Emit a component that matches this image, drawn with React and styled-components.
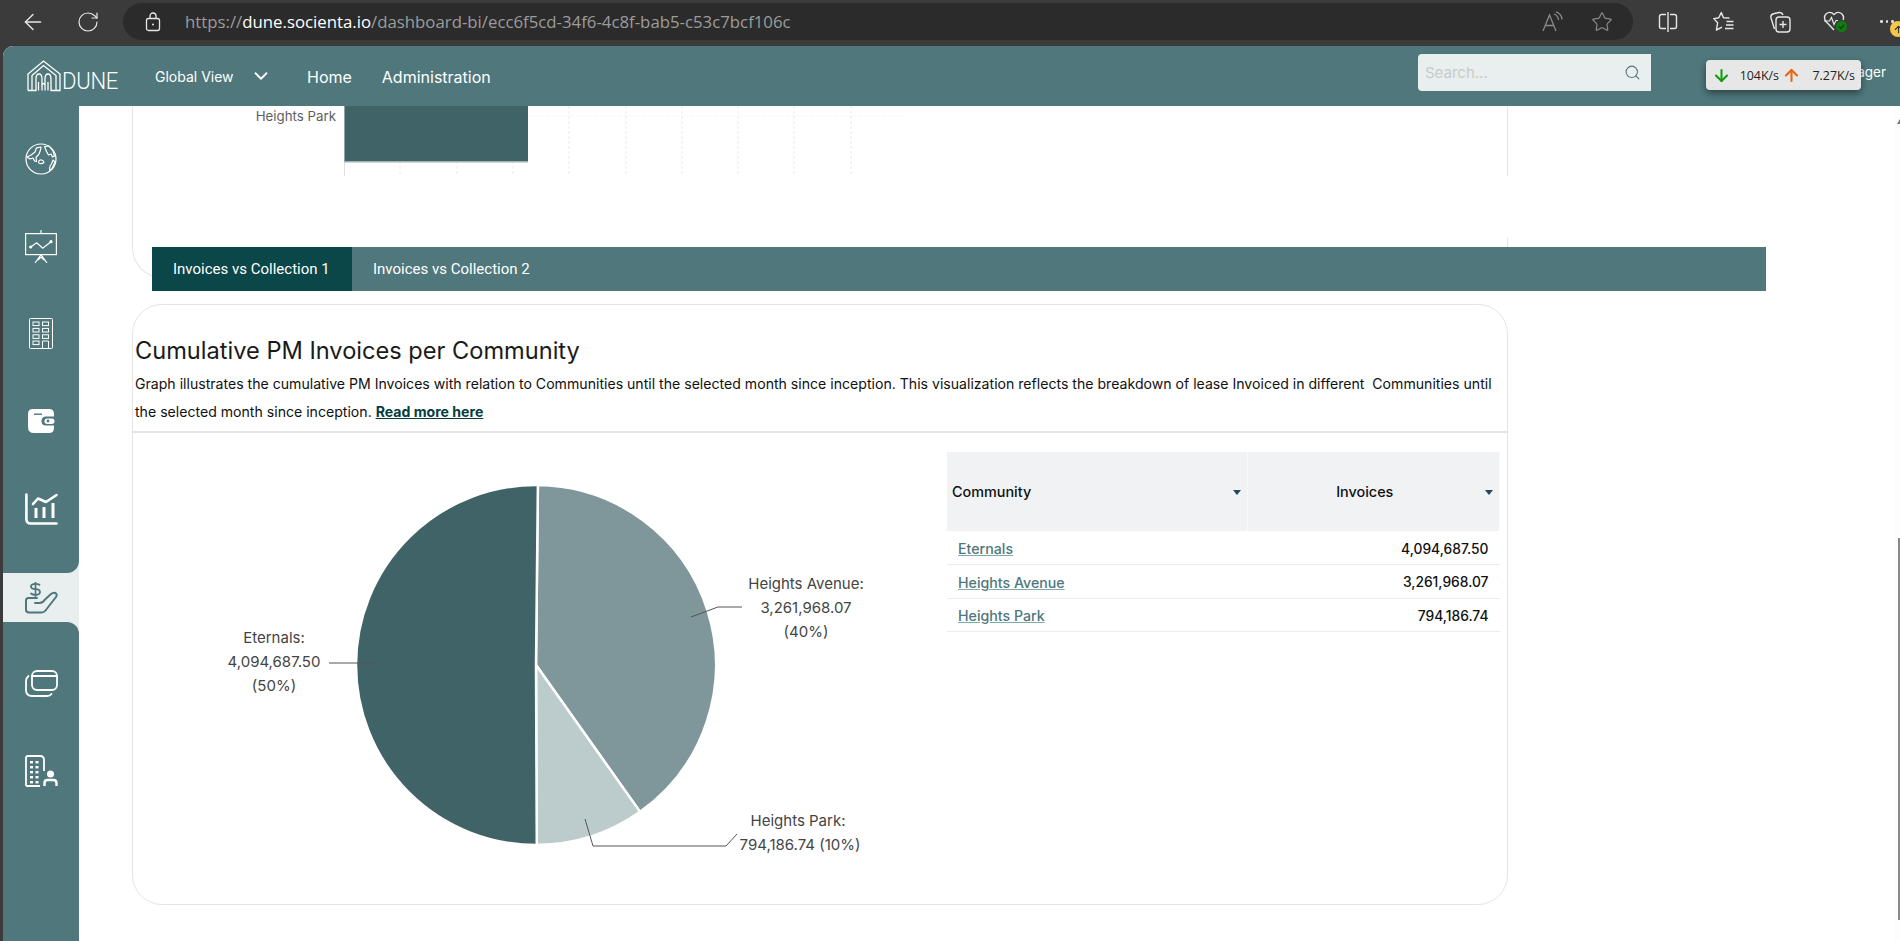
import styled, { createGlobalStyle } from "styled-components";
import { ArrowDown, ArrowLeft, ArrowUp, ChevronDown, RotateCw, Search, Star } from "lucide-react";

const TEAL = "#4f777c";
const PALE = "#e9eeee";
const FONT = `Inter, "Open Sans", sans-serif`;

const GlobalStyle = createGlobalStyle`
    html, body {
        margin: 0;
        padding: 0;
        background: #3b3b3b;
        overflow: hidden;
    }
    * {
        box-sizing: border-box;
    }
`;

const Page = styled.div`
    width: 1900px;
    height: 941px;
    display: flex;
    flex-direction: column;
    background: #3b3b3b;
    font-family: ${FONT};
`;

/* browser toolbar */
const BrowserBar = styled.div`
    height: 46px;
    flex: none;
    display: flex;
    align-items: flex-start;
    padding-top: 3px;
    color: #e6e6e6;
`;

const BrowserSlot = styled.div`
    width: ${(p) => p.$width || 56}px;
    height: 37px;
    flex: none;
    display: flex;
    align-items: center;
    justify-content: ${(p) => p.$justify || "center"};
`;

const UrlPill = styled.div`
    width: 1510px;
    height: 37px;
    margin: 0 7px 0 7px;
    flex: none;
    display: flex;
    align-items: center;
    padding-left: 22px;
    background: #2b2b2b;
    border-radius: 19px;
    color: #a9a9a9;
`;

const UrlText = styled.div`
    margin-left: 24px;
    flex: 1;
    font-family: "Open Sans", sans-serif;
    font-size: 16.8px;
    color: #9c9c9c;
    white-space: nowrap;
    b {
        font-weight: 400;
        color: #fff;
    }
`;

const ReadAloud = styled.span`
    display: flex;
    align-items: center;
    width: 49px;
`;

const FavSlot = styled.span`
    display: flex;
    width: 42px;
`;

const Dots = styled.div`
    display: flex;
    gap: 3px;
    margin-left: 16px;
    i {
        width: 2.5px;
        height: 2.5px;
        border-radius: 50%;
        background: #ddd;
    }
`;

const UpdateBadge = styled.div`
    position: absolute;
    left: 1890px;
    top: 21px;
    width: 16px;
    height: 16px;
    display: flex;
    align-items: center;
    justify-content: center;
    border-radius: 50%;
    background: #f5c84c;
    color: #333;
`;

/* app shell */
const ShellWrap = styled.div`
    flex: 1;
    min-height: 0;
    padding-left: 3px;
    display: flex;
`;

const Shell = styled.div`
    flex: 1;
    min-width: 0;
    position: relative;
    display: flex;
    flex-direction: column;
    background: #fff;
    border-top-left-radius: 10px;
    overflow: hidden;
`;

const Header = styled.header`
    height: 60px;
    flex: none;
    display: flex;
    align-items: center;
    background: ${TEAL};
    color: #fff;
`;

const Logo = styled.div`
    width: 89px;
    margin-left: 24px;
    display: flex;
    align-items: flex-end;
    height: 32px;
    svg {
        flex: none;
    }
`;

const LogoWord = styled.span`
    flex: none;
    font-family: "Roboto", sans-serif;
    font-weight: 300;
    font-size: 24px;
    line-height: 22px;
    letter-spacing: -0.3px;
    margin-left: 1px;
    transform: scaleX(0.92);
    transform-origin: left;
`;

const ViewSelect = styled.div`
    margin-left: 39px;
    width: 152px;
    display: flex;
    align-items: center;
    gap: 16px;
    font-size: 14px;
    svg {
        flex: none;
    }
`;

const NavLink = styled.a`
    font-size: 16px;
    margin-right: 30px;
    padding-top: 1px;
    color: #fff;
`;

const SearchBox = styled.div`
    margin-left: auto;
    width: 233px;
    height: 37px;
    margin-top: -7px;
    display: flex;
    align-items: center;
    padding: 0 10px 0 7px;
    background: ${PALE};
    border-radius: 4px 0 0 4px;
    color: ${TEAL};
`;

const SearchInput = styled.input`
    flex: 1;
    min-width: 0;
    padding: 0;
    border: 0;
    outline: 0;
    background: none;
    font-family: ${FONT};
    font-size: 15px;
    &::placeholder {
        color: #c6cbcb;
    }
`;

const UserName = styled.div`
    width: 249px;
    padding-right: 14px;
    text-align: right;
    font-size: 13.5px;
    margin-top: -8px;
`;

const SpeedMeter = styled.div`
    position: absolute;
    left: 1703px;
    top: 14px;
    width: 155px;
    height: 30px;
    display: flex;
    align-items: center;
    padding-left: 6px;
    background: #e7e7e7;
    border-radius: 4px;
    box-shadow: 0 3px 7px rgba(0, 0, 0, 0.45);
    font-family: "Open Sans", sans-serif;
    font-size: 12.4px;
    color: #222;
`;

const SpeedValue = styled.span`
    width: ${(p) => p.$width}px;
    text-align: right;
`;

const Body = styled.div`
    flex: 1;
    min-height: 0;
    display: flex;
`;

/* sidebar */
const Sidebar = styled.aside`
    width: 76px;
    flex: none;
    display: flex;
    flex-direction: column;
    background: ${PALE};
`;

const NavGroup = styled.nav`
    background: ${TEAL};
    color: #fff;
    height: ${(p) => (p.$fill ? "auto" : "467px")};
    flex: ${(p) => (p.$fill ? 1 : "none")};
    padding-top: ${(p) => (p.$fill ? 18 : 9)}px;
    border-bottom-right-radius: ${(p) => (p.$fill ? 0 : 12)}px;
    border-top-right-radius: ${(p) => (p.$fill ? 12 : 0)}px;
`;

const NavItem = styled.div`
    height: 87.5px;
    display: flex;
    align-items: center;
    justify-content: center;
`;

const ActiveItem = styled.div`
    height: 49px;
    flex: none;
    display: flex;
    align-items: center;
    justify-content: center;
    background: ${PALE};
    color: ${TEAL};
`;

/* main area */
const Main = styled.main`
    flex: 1;
    min-width: 0;
    position: relative;
    overflow: hidden;
    background: #fff;
`;

const ScrollEdge = styled.div`
    position: absolute;
    right: 0;
    top: 0;
    bottom: 0;
    width: 6px;
    background: #fdfdfd;
`;

const ScrollArrow = styled.div`
    position: absolute;
    right: 0;
    top: 13px;
    border-left: 3px solid transparent;
    border-bottom: 5px solid #777;
`;

const ScrollThumb = styled.div`
    position: absolute;
    right: 0;
    top: 432px;
    height: 382px;
    width: 2px;
    background: #8a8a8a;
`;

const TopCard = styled.section`
    position: relative;
    width: 1376px;
    height: 172px;
    margin-left: 53px;
    border: 1px solid #e4e4e4;
    border-top: 0;
    border-radius: 0 0 30px 30px;
    &::after {
        content: "";
        position: absolute;
        right: -1px;
        top: 70px;
        width: 1px;
        height: 62px;
        background: #fff;
    }
`;

const BarChart = styled.svg`
    display: block;
`;

const TabBar = styled.div`
    position: relative;
    width: 1614px;
    height: 44px;
    margin: -31px 0 0 73px;
    display: flex;
    background: ${TEAL};
`;

const Tab = styled.div`
    width: 200px;
    height: 44px;
    padding-left: 21px;
    display: flex;
    align-items: center;
    background: ${(p) => (p.$active ? "#0b4648" : "transparent")};
    color: #fff;
    font-family: "Roboto", sans-serif;
    font-size: 15px;
    font-weight: 400;
    white-space: nowrap;
`;

const PieCard = styled.section`
    width: 1376px;
    height: 601px;
    margin: 13px 0 0 53px;
    padding-top: 28px;
    border: 1px solid #e4e4e4;
    border-radius: 30px;
`;

const CardTitle = styled.h2`
    margin: 0 0 0 2px;
    font-size: 23.6px;
    line-height: 35px;
    font-weight: 400;
    color: #1a1a1a;
`;

const CardText = styled.p`
    margin: 2px 0 0 2px;
    font-size: 14.1px;
    line-height: 28px;
    color: #111;
    white-space: nowrap;
    a {
        font-weight: 700;
        color: #063c3e;
        text-decoration: underline;
    }
`;

const Divider = styled.hr`
    margin: 5px 0 0;
    border: 0;
    height: 2px;
    background: #e6e6e6;
`;

const ChartRow = styled.div`
    display: flex;
    align-items: flex-start;
`;

const PieSvg = styled.svg`
    display: block;
    flex: none;
`;

const DataTable = styled.table`
    width: 553px;
    margin: 19px 0 0 34px;
    border-collapse: collapse;
    table-layout: fixed;
`;

const HeadCell = styled.th`
    position: relative;
    height: 79px;
    padding: 0 ${(p) => (p.$center ? 22 : 5)}px 0 5px;
    background: #f0f2f4;
    border-right: 1px solid #fafafa;
    font-size: 14.4px;
    font-weight: 500;
    color: #111;
    text-align: ${(p) => (p.$center ? "center" : "left")};
`;

const SortCaret = styled.span`
    position: absolute;
    right: ${(p) => p.$right}px;
    top: 38px;
    border-left: 4px solid transparent;
    border-right: 4px solid transparent;
    border-top: 5px solid #23475c;
`;

const Row = styled.tr`
    height: 33.5px;
    border-bottom: 1px solid #ececec;
`;

const NameCell = styled.td`
    padding: 2px 0 0 11px;
    font-size: 14.2px;
    a {
        color: ${TEAL};
        font-weight: 500;
        text-decoration: underline;
        text-decoration-color: #7fa9ad;
    }
`;

const ValueCell = styled.td`
    padding: 2px 11px 0 0;
    font-size: 13.8px;
    text-align: right;
    font-weight: 500;
    color: #111;
`;

const ChartLabel = styled.text`
    font-family: ${FONT};
    font-size: 15px;
    fill: #444;
    text-anchor: ${(p) => p.$anchor || "middle"};
`;

const AxisLabel = styled(ChartLabel)`
    font-size: 13.3px;
    fill: #5e5e5e;
`;

const rows = [
    { name: "Eternals", value: 4094687.5, label: "4,094,687.50" },
    { name: "Heights Avenue", value: 3261968.07, label: "3,261,968.07" },
    { name: "Heights Park", value: 794186.74, label: "794,186.74" },
];

const pieColors = { Eternals: "#3f6366", "Heights Avenue": "#7f979a", "Heights Park": "#bccbcc" };

function slicePath(cx, cy, r, from, to) {
    const point = (deg) => {
        const a = ((deg - 90) * Math.PI) / 180;
        return `${cx + r * Math.cos(a)} ${cy + r * Math.sin(a)}`;
    };
    const large = to - from > 180 ? 1 : 0;
    return `M${cx} ${cy} L${point(from)} A${r} ${r} 0 ${large} 1 ${point(to)} Z`;
}

function pieSlices() {
    const total = rows.reduce((sum, r) => sum + r.value, 0);
    // highcharts order: avenue, park, then eternals wraps round
    const order = [rows[1], rows[2], rows[0]];
    let start = 0.6;
    return order.map((r) => {
        const sweep = (r.value / total) * 360;
        const d = slicePath(536, 665, 180, start, start + sweep);
        start += sweep;
        return { name: r.name, d };
    });
}

function PieChart() {
    return (
        <PieSvg width="780" height="470" viewBox="133 433 780 470">
            {pieSlices().map((s) => (
                <path key={s.name} d={s.d} fill={pieColors[s.name]} stroke="#fff" strokeWidth="2.5" strokeLinejoin="round" />
            ))}
            <g fill="none" stroke="#555" strokeWidth="1">
                <path d="M691 617 L718 607 L742 607" />
                <path d="M329 663 L374 663" />
                <path d="M585 819 L593 846 L726 846 L737 834" />
            </g>
            <ChartLabel x="806" y="589">Heights Avenue:</ChartLabel>
            <ChartLabel x="806" y="613">3,261,968.07</ChartLabel>
            <ChartLabel x="806" y="637">(40%)</ChartLabel>
            <ChartLabel x="274" y="643">Eternals:</ChartLabel>
            <ChartLabel x="274" y="667">4,094,687.50</ChartLabel>
            <ChartLabel x="274" y="691">(50%)</ChartLabel>
            <ChartLabel x="798" y="826">Heights Park:</ChartLabel>
            <ChartLabel x="800" y="850">794,186.74 (10%)</ChartLabel>
        </PieSvg>
    );
}

function TopBars() {
    const ticks = [400, 457, 513, 569, 626, 682, 738, 794, 851];
    return (
        <BarChart width="800" height="72" viewBox="133 106 800 72">
            {ticks.map((x) => (
                <line key={x} x1={x} x2={x} y1="106" y2="176" stroke="#eaeaea" strokeDasharray="3 2" />
            ))}
            <line x1="344.5" x2="344.5" y1="106" y2="176" stroke="#e0e0e0" />
            <line x1="528" x2="903" y1="116" y2="116" stroke="#ececec" strokeDasharray="1 2" />
            <rect x="344.5" y="106" width="183.5" height="56" fill="#3f6366" />
            <rect x="344.5" y="161" width="183.5" height="1.5" fill="#9fb3b5" />
            <AxisLabel $anchor="end" x="336" y="121">Heights Park</AxisLabel>
        </BarChart>
    );
}

/* icons */
const LockIcon = () => (
    <svg width="16" height="20" viewBox="0 0 16 20" fill="none" stroke="#e6e6e6" strokeWidth="1.3">
        <rect x="1.5" y="6.5" width="13" height="12" rx="2" />
        <path d="M5 6.5V4a3 3 0 0 1 6 0v2.5" />
        <circle cx="8" cy="12.5" r="1" fill="#e6e6e6" stroke="none" />
    </svg>
);

const ReadIcon = () => (
    <svg width="22" height="22" viewBox="0 0 22 22" fill="none" stroke="#8a8a8a" strokeWidth="1.3">
        <path d="M1 20 L7.5 4 L14 20 M3.5 14.5 H11.5" />
        <path d="M12 3 Q16 4.5 16.5 9 M14 0.8 Q19.5 2.5 20 8.5" />
    </svg>
);

const SplitIcon = () => (
    <svg width="20" height="22" viewBox="0 0 20 22" fill="none" stroke="#e6e6e6" strokeWidth="1.4">
        <path d="M8 3.5H3.5a2 2 0 0 0-2 2v10a2 2 0 0 0 2 2H8 M12 3.5h4.5a2 2 0 0 1 2 2v10a2 2 0 0 1-2 2H12" />
        <path d="M10 1v20" />
    </svg>
);

const FavoritesIcon = () => (
    <svg width="22" height="22" viewBox="0 0 22 22" fill="none" stroke="#e6e6e6" strokeWidth="1.4" strokeLinejoin="round">
        <path d="M16.5 7 L10.5 6.8 L8.3 1.5 L5.8 6.8 L0.8 7.6 L4.6 11.8 L3.4 19 L9 16.2" />
        <path d="M13.5 10.5h7 M13 14h7.5 M12 17.5h8.5" />
    </svg>
);

const CollectionsIcon = () => (
    <svg width="22" height="22" viewBox="0 0 22 22" fill="none" stroke="#e6e6e6" strokeWidth="1.4">
        <path d="M5.5 18 L2 7 Q1.3 3.5 4.5 2.7 L10 1.5 Q13 1.2 14 4" />
        <rect x="7" y="6" width="14" height="15" rx="3" />
        <path d="M14 10v7 M10.5 13.5h7" />
    </svg>
);

const HeartIcon = () => (
    <svg width="26" height="24" viewBox="0 0 26 24" fill="none">
        <path d="M11 20 L3 11.5 Q0 7.5 3 4 Q7 0.5 11 4.5 Q15 0.5 19 4 Q21.5 7 20 10" stroke="#e6e6e6" strokeWidth="1.4" />
        <path d="M1 11 H6.5 L8.5 7.5 L11 14.5 L13 10.5 H15" stroke="#e6e6e6" strokeWidth="1.2" />
        <circle cx="18.5" cy="16.5" r="5.5" fill="#107c10" />
        <path d="M16 16.5 L18 18.5 L21 14.8" stroke="#0b3d0b" strokeWidth="1.3" />
    </svg>
);

const LogoMark = () => (
    <svg width="34" height="32" viewBox="0 0 34 32" fill="none" stroke="#fff" strokeWidth="1.3">
        <path d="M1 30.5 V14 L16.5 1 L33 14 V30.5 H27" />
        <path d="M5 30.5 V15.5 L16.5 5.5 L29 15.5 V30.5" />
        <path d="M1 30.5 H9 V19 Q9 14 12 14 Q15 14 15 19 V30.5 M18 30.5 V19 Q18 14 21 14 Q24 14 24 19 V30.5 H27" />
        <path d="M11.5 30.5 V22 M21 30.5 V22 M15 25 Q16.5 22 18 25" />
    </svg>
);

const GlobeIcon = () => (
    <svg width="32" height="32" viewBox="0 0 32 32" fill="none" stroke="currentColor" strokeWidth="1.2" strokeLinejoin="round">
        <circle cx="16" cy="16" r="15" />
        <path d="M16 4 L11.5 4.8 L10 9 L6 12 L2 14 L5 16 L8 15 L9.5 18 L11.5 18.5 L11 14.5 L14 11 L15.5 7 Z" />
        <path d="M19.5 3.5 L24 3 L28 8 L29.5 13 L27.5 14 L26 11 L23.5 12 L21.5 8.5 Z" />
        <path d="M13.5 19 Q14 16.5 16.5 17 Q19 17.5 18.8 19.8 Q17 21 15 20.5 Q13.5 20.5 13.5 19 Z" />
        <path d="M28 17 L30 19 L26.5 26.5 L24.5 27 L25 23 L26.5 21 Z" />
    </svg>
);

const BoardIcon = () => (
    <svg width="32" height="33" viewBox="0 0 32 33" fill="none" stroke="currentColor" strokeWidth="1.2">
        <rect x="0.6" y="3.6" width="30.8" height="21" />
        <path d="M16 0v3.6 M16 24.6 L10 33 M16 24.6 L22 33 M16 27 L13 30 M16 27 L19 30" />
        <path d="M5.7 17 L11.7 12.7 L17.7 18.3 L26 11.7" />
        <circle cx="5.7" cy="17" r="1" fill="currentColor" />
        <circle cx="26" cy="11.7" r="1" fill="currentColor" />
    </svg>
);

const BuildingIcon = () => (
    <svg width="24" height="31" viewBox="0 0 24 31" fill="none" stroke="currentColor" strokeWidth="1">
        <rect x="0.5" y="0.5" width="23" height="30" rx="1" />
        <rect x="4" y="4" width="6" height="3.6" />
        <rect x="13.5" y="4" width="6" height="3.6" />
        <rect x="4" y="10.4" width="6" height="3.6" />
        <rect x="13.5" y="10.4" width="6" height="3.6" />
        <rect x="4" y="16.8" width="6" height="3.6" />
        <rect x="13.5" y="16.8" width="6" height="3.6" />
        <rect x="4" y="23" width="6" height="3.6" />
        <path d="M13.5 30.5 V23 H19.5 V30.5" />
    </svg>
);

const WalletIcon = () => (
    <svg width="27" height="24" viewBox="0 0 27 24">
        <path d="M5 0 H21 Q26 0 26 5 V7.5 H18 Q13.5 7.5 13.5 12 Q13.5 16.5 18 16.5 H26 V19 Q26 24 21 24 H6 Q0 24 0 18 V5 Q0 0 5 0 Z" fill="currentColor" />
        <path d="M6 5.2 H14" stroke={TEAL} strokeWidth="1.4" />
        <rect x="16.5" y="9.5" width="10" height="5.5" rx="2.7" fill="currentColor" />
        <circle cx="20" cy="12" r="1.4" fill={TEAL} />
    </svg>
);

const GrowthIcon = () => (
    <svg width="33" height="32" viewBox="0 0 33 32" fill="none" stroke="currentColor" strokeWidth="2.6" strokeLinecap="round" strokeLinejoin="round">
        <path d="M1.4 1.5 V26 Q1.4 30.5 6 30.5 H31.5" />
        <path d="M8 11 L13 5.5 L21 9 L31.5 2" />
        <path d="M11 15v10 M19 14v11 M28 10v15" strokeWidth="3" strokeLinecap="butt" />
    </svg>
);

const HandCoinIcon = () => (
    <svg width="33" height="32" viewBox="0 0 33 32" fill="none" stroke="currentColor" strokeWidth="2" strokeLinecap="round" strokeLinejoin="round">
        <path d="M14.5 2.8 Q13 1.8 10.5 1.8 Q6 1.8 6 4.6 Q6 7 10.5 7.2 Q15 7.5 15 10 Q15 12.8 10.5 12.8 Q7.5 12.8 6 11.5" strokeWidth="1.8" />
        <path d="M10.5 0v14.5" strokeWidth="1.6" />
        <path d="M12 16 H3.5 Q1 16 1 18.5 V27.5 Q1 30.5 4 30.5 H16.5 Q19 30.5 20.5 28.5 L31 15 Q32.5 12.5 30.5 11 Q28.5 10 26 12 L20 17.5 Q18 21 14.5 21 H10" />
    </svg>
);

const CardsIcon = () => (
    <svg width="33" height="27" viewBox="0 0 33 27" fill="none" stroke="currentColor" strokeWidth="1.8" strokeLinecap="round">
        <rect x="7" y="1" width="25" height="19" rx="5" />
        <path d="M7 6 H32" />
        <path d="M3.5 6 Q1 8 1 11 V20 Q1 26 7 26 H22 Q25 26 26.5 24" />
    </svg>
);

const TenantIcon = () => (
    <svg width="33" height="32" viewBox="0 0 33 32">
        <path d="M1 31 V3 Q1 1 3 1 H15 Q19 1 19 5 V16 M15 31 H1" fill="none" stroke="currentColor" strokeWidth="1.8" />
        <g fill="currentColor">
            {[6, 11, 16, 21, 26].map((y) => (
                <g key={y}>
                    <rect x="5" y={y} width="3" height="2.4" />
                    <rect x="10.5" y={y} width="3" height="2.4" />
                </g>
            ))}
            <circle cx="25.5" cy="19" r="3.5" />
        </g>
        <path d="M19.5 31 V28 Q19.5 25 22.5 25 H28.5 Q31.5 25 31.5 28 V31" fill="none" stroke="currentColor" strokeWidth="2.4" />
    </svg>
);

export default function App() {
    return (
        <Page>
            <GlobalStyle />
            <BrowserBar>
                <BrowserSlot $width={55} style={{ marginLeft: 5 }}>
                    <ArrowLeft size={26} strokeWidth={1.3} />
                </BrowserSlot>
                <BrowserSlot>
                    <RotateCw size={24} strokeWidth={1.2} />
                </BrowserSlot>
                <UrlPill>
                    <LockIcon />
                    <UrlText>
                        https://<b>dune.socienta.io</b>/dashboard-bi/ecc6f5cd-34f6-4c8f-bab5-c53c7bcf106c
                    </UrlText>
                    <ReadAloud>
                        <ReadIcon />
                    </ReadAloud>
                    <FavSlot>
                        <Star size={22} strokeWidth={1.3} color="#8a8a8a" />
                    </FavSlot>
                </UrlPill>
                <BrowserSlot>
                    <SplitIcon />
                </BrowserSlot>
                <BrowserSlot>
                    <FavoritesIcon />
                </BrowserSlot>
                <BrowserSlot>
                    <CollectionsIcon />
                </BrowserSlot>
                <BrowserSlot>
                    <HeartIcon />
                </BrowserSlot>
                <BrowserSlot $width={36} $justify="flex-start">
                    <Dots>
                        <i />
                        <i />
                        <i />
                    </Dots>
                </BrowserSlot>
                <UpdateBadge>
                    <ArrowUp size={11} strokeWidth={2.4} />
                </UpdateBadge>
            </BrowserBar>
            <ShellWrap>
                <Shell>
                    <Header>
                        <Logo>
                            <LogoMark />
                            <LogoWord>DUNE</LogoWord>
                        </Logo>
                        <ViewSelect>
                            Global View
                            <ChevronDown size={22} strokeWidth={2} />
                        </ViewSelect>
                        <NavLink>Home</NavLink>
                        <NavLink>Administration</NavLink>
                        <SearchBox>
                            <SearchInput placeholder="Search..." />
                            <Search size={17} strokeWidth={1.5} />
                        </SearchBox>
                        <UserName>Manager</UserName>
                    </Header>
                    <SpeedMeter>
                        <ArrowDown size={19} strokeWidth={2.6} color="#0f9d0f" />
                        <SpeedValue $width={48}>104K/s</SpeedValue>
                        <ArrowUp size={19} strokeWidth={2.6} color="#e8650f" style={{ marginLeft: 3 }} />
                        <SpeedValue $width={54}>7.27K/s</SpeedValue>
                    </SpeedMeter>
                    <Body>
                        <Sidebar>
                            <NavGroup>
                                <NavItem><GlobeIcon /></NavItem>
                                <NavItem><BoardIcon /></NavItem>
                                <NavItem><BuildingIcon /></NavItem>
                                <NavItem><WalletIcon /></NavItem>
                                <NavItem><GrowthIcon /></NavItem>
                            </NavGroup>
                            <ActiveItem><HandCoinIcon /></ActiveItem>
                            <NavGroup $fill>
                                <NavItem><CardsIcon /></NavItem>
                                <NavItem><TenantIcon /></NavItem>
                            </NavGroup>
                        </Sidebar>
                        <Main>
                            <TopCard>
                                <TopBars />
                            </TopCard>
                            <TabBar>
                                <Tab $active>Invoices vs Collection 1</Tab>
                                <Tab>Invoices vs Collection 2</Tab>
                            </TabBar>
                            <PieCard>
                                <CardTitle>Cumulative PM Invoices per Community</CardTitle>
                                <CardText>
                                    Graph illustrates the cumulative PM Invoices with relation to Communities until the selected month since inception. This visualization reflects the breakdown of lease Invoiced in different&nbsp; Communities until
                                    <br />
                                    the selected month since inception. <a>Read more here</a>
                                </CardText>
                                <Divider />
                                <ChartRow>
                                    <PieChart />
                                    <DataTable>
                                        <colgroup>
                                            <col style={{ width: 300 }} />
                                            <col />
                                        </colgroup>
                                        <thead>
                                            <tr>
                                                <HeadCell>
                                                    Community
                                                    <SortCaret $right={6} />
                                                </HeadCell>
                                                <HeadCell $center>
                                                    Invoices
                                                    <SortCaret $right={6} />
                                                </HeadCell>
                                            </tr>
                                        </thead>
                                        <tbody>
                                            {rows.map((r) => (
                                                <Row key={r.name}>
                                                    <NameCell><a>{r.name}</a></NameCell>
                                                    <ValueCell>{r.label}</ValueCell>
                                                </Row>
                                            ))}
                                        </tbody>
                                    </DataTable>
                                </ChartRow>
                            </PieCard>
                            <ScrollEdge />
                            <ScrollArrow />
                            <ScrollThumb />
                        </Main>
                    </Body>
                </Shell>
            </ShellWrap>
        </Page>
    );
}
